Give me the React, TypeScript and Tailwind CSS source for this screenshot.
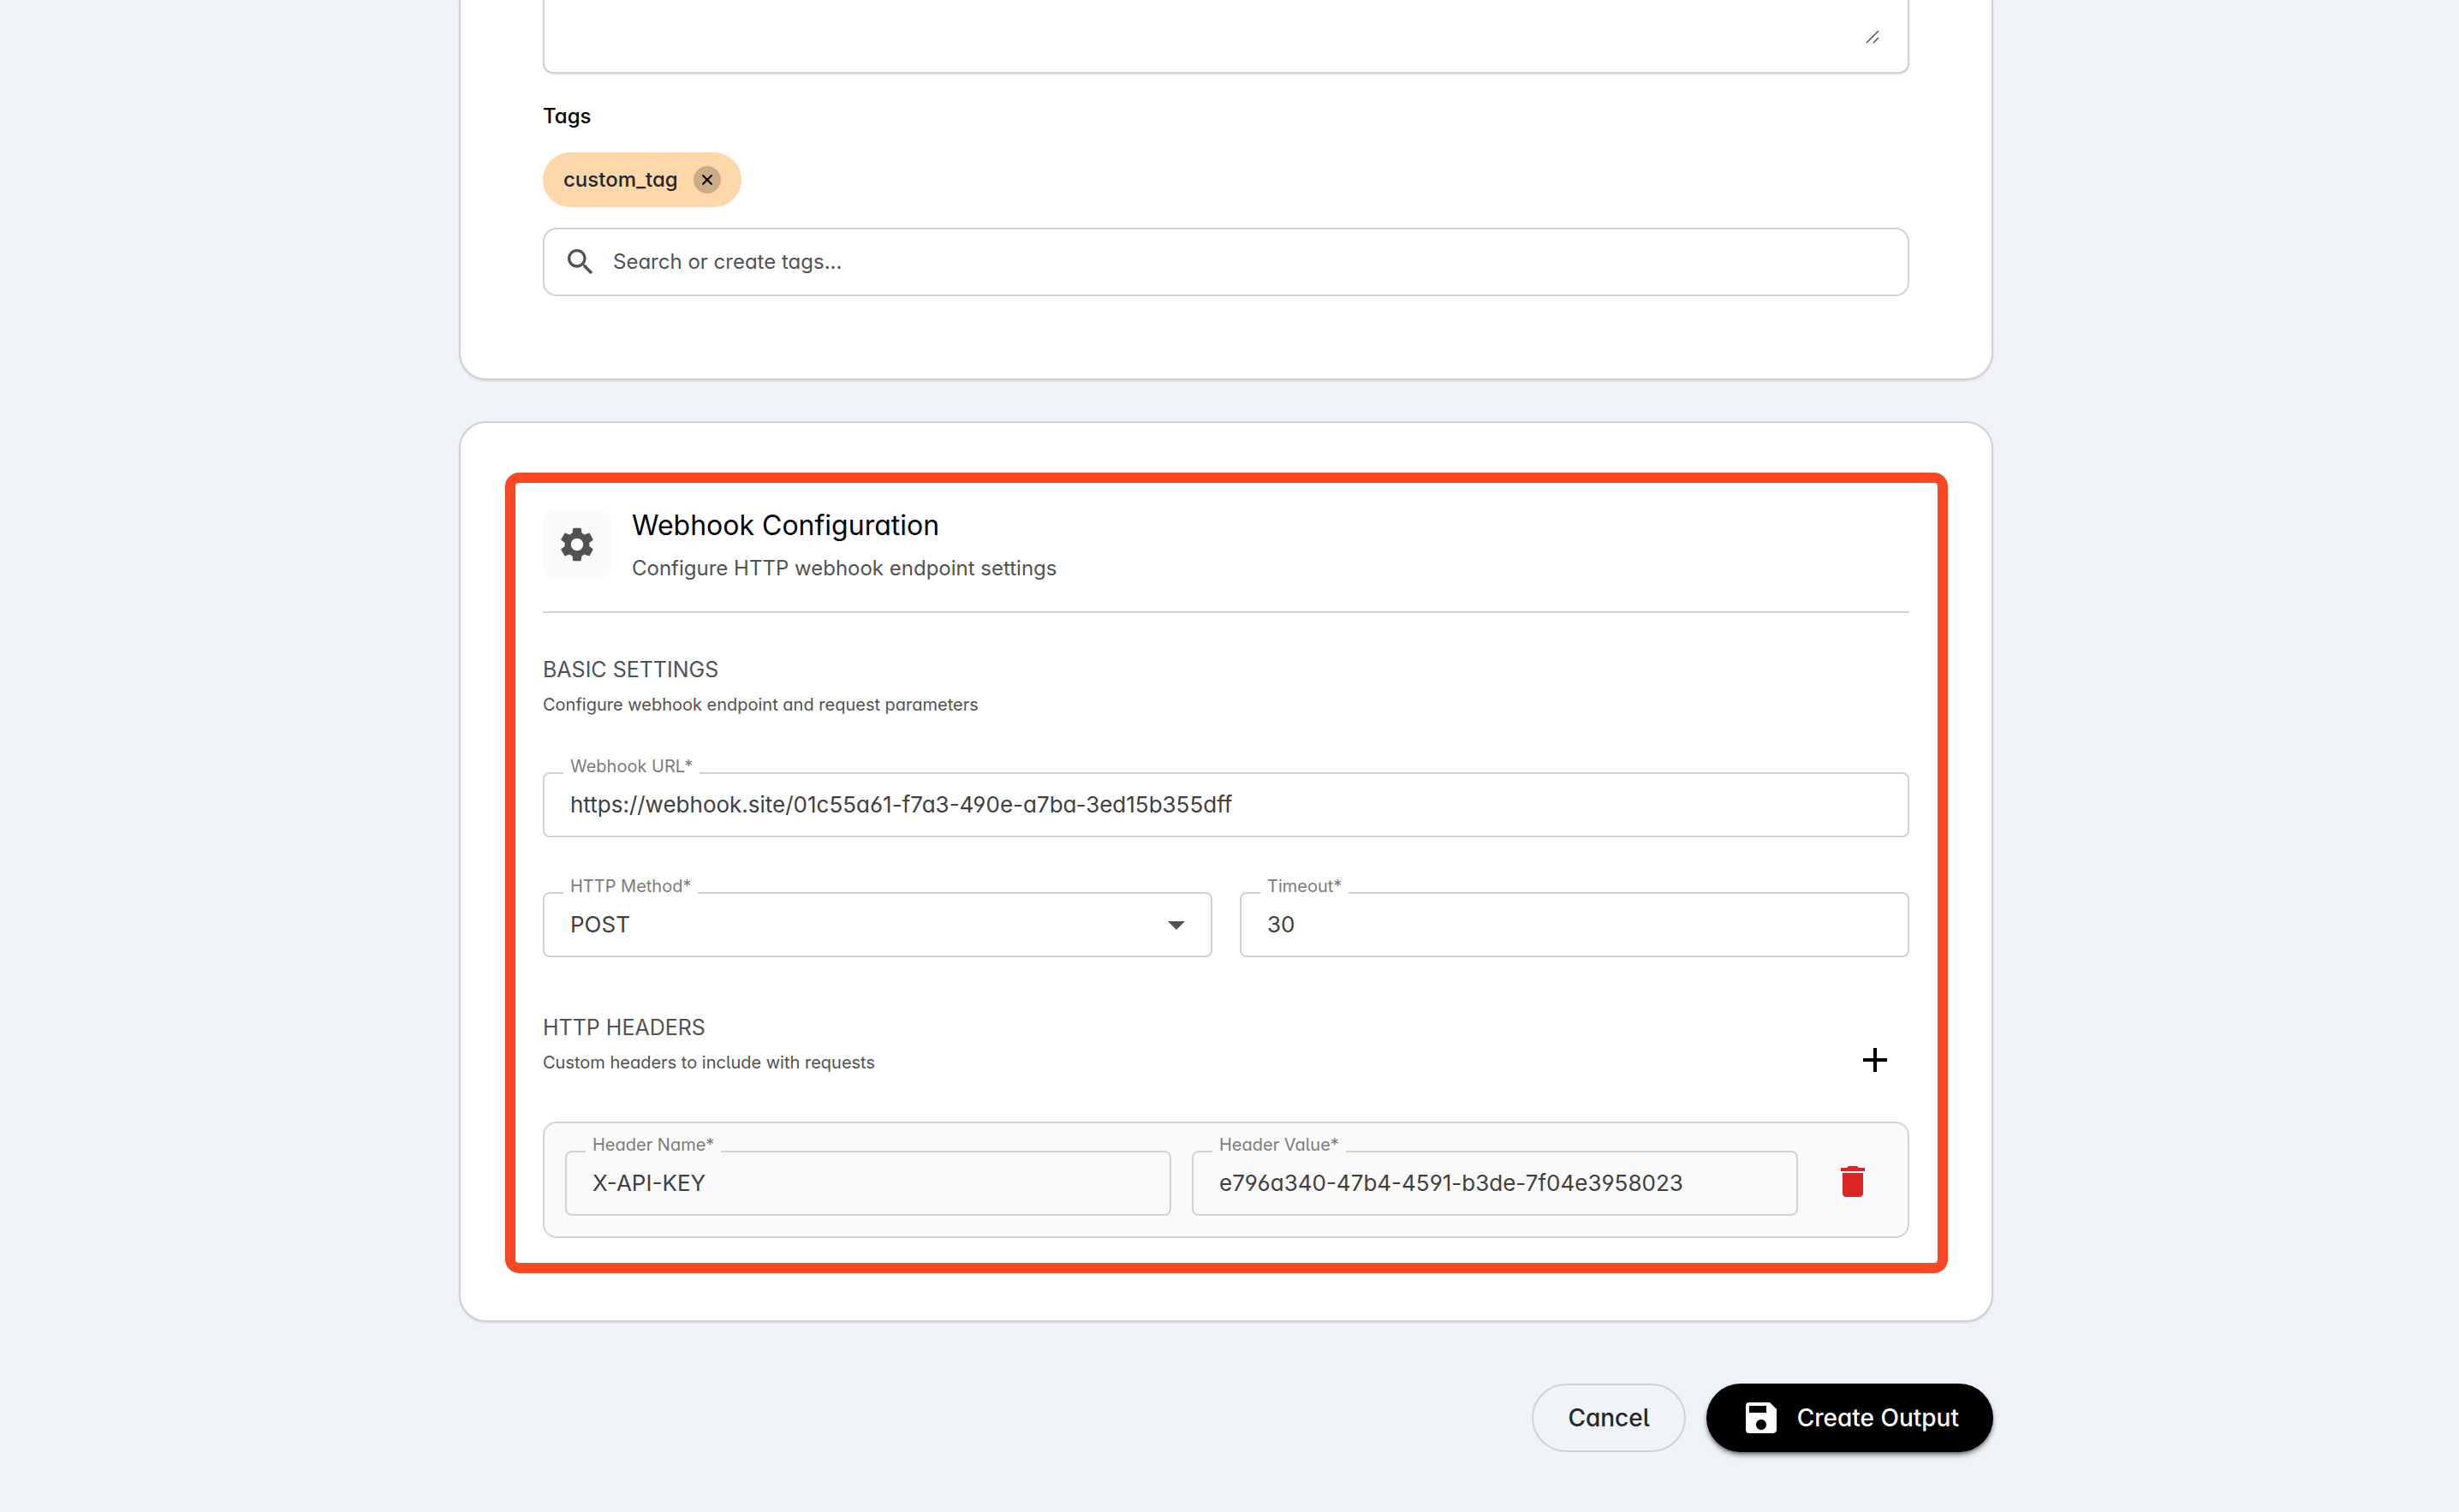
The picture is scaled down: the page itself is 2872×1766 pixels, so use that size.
import React, { useId } from "react";
import { MdAdd, MdDelete, MdSave, MdSearch, MdSettings } from "react-icons/md";

type FieldProps = {
  label: string;
  tone?: "white" | "muted";
  children: (id: string) => React.ReactNode;
};

const control =
  "block h-[76px] w-full appearance-none rounded-lg border-2 border-[#d2d2d2] bg-transparent px-[30px] pb-0.5 text-[26px] text-[#404040] outline-none";

function Field({ label, tone = "white", children }: FieldProps) {
  const id = useId();
  const background = tone === "white" ? "bg-white" : "bg-[#fafafa]";
  return (
    <div className="relative min-w-0 flex-1">
      {children(id)}
      <label
        htmlFor={id}
        className={`absolute -top-5 left-6 px-2 text-[20px] leading-[26px] text-[#7c7c7c] ${background}`}
      >
        {label}
      </label>
    </div>
  );
}

function TextField({ label, value, tone }: { label: string; value: string; tone?: "white" | "muted" }) {
  return (
    <Field label={label} tone={tone}>
      {(id) => <input id={id} type="text" defaultValue={value} className={control} />}
    </Field>
  );
}

function SectionHeading({ title, hint }: { title: string; hint: string }) {
  return (
    <div>
      <h3 className="text-[25px] leading-[34px] text-[#525252]">{title}</h3>
      <p className="mt-[10px] text-[20px] leading-7 text-[#525252]">{hint}</p>
    </div>
  );
}

export default function App() {
  return (
    <div className="min-h-screen bg-[#f0f4f9] pr-2 pb-[70px] font-['Inter','Liberation_Sans',sans-serif] [font-feature-settings:'cv03'_1,'cv04'_1,'cv05'_1,'cv11'_1]">
      <main className="mx-auto max-w-[1792px]">
        <section className="rounded-b-[32px] border-2 border-t-0 border-[#d2d2d2] bg-white px-24 pb-24 shadow-sm">
          <div className="relative rounded-b-xl border-2 border-t-0 border-[#d2d2d2] shadow-sm">
            <textarea
              aria-label="Description"
              className="block h-[84px] w-full resize-none bg-transparent px-8 text-[26px] outline-none"
            />
            <svg
              className="absolute right-[33px] bottom-[33px] size-4 text-[#5a5a5a]"
              viewBox="0 0 16 16"
              fill="none"
              stroke="currentColor"
              strokeWidth="1.6"
              aria-hidden="true"
            >
              <path d="M1 15 15 1M9 15l6-6" />
            </svg>
          </div>

          <h3 className="mt-8 text-[24px] leading-9 font-medium text-black">Tags</h3>
          <div className="mt-6 flex">
            <span className="flex h-16 items-center gap-[18px] rounded-full bg-[#fed7aa] px-6 text-[24px] font-medium text-[#262626]">
              custom_tag
              <button
                type="button"
                aria-label="Remove custom_tag"
                className="flex size-8 items-center justify-center rounded-full bg-black/20 text-black"
              >
                <svg className="size-3" viewBox="0 0 12 12" stroke="currentColor" strokeWidth="2" aria-hidden="true">
                  <path d="M.5.5l11 11M11.5.5l-11 11" />
                </svg>
              </button>
            </span>
          </div>
          <div className="mt-6 flex h-20 items-center gap-[18px] rounded-2xl border-2 border-[#d2d2d2] px-[22px]">
            <MdSearch className="size-10 shrink-0 text-[#525252]" aria-hidden="true" />
            <input
              type="text"
              aria-label="Search or create tags"
              placeholder="Search or create tags..."
              className="w-full bg-transparent text-[24px] outline-none placeholder:text-[#525252]"
            />
          </div>
        </section>

        <section className="mt-12 rounded-[32px] border-2 border-[#d2d2d2] bg-white pt-[58px] pr-[51px] pb-[55px] pl-[52px] shadow-sm">
          <div className="rounded-2xl border-12 border-[#f94623] pt-7 pr-[33px] pb-[29px] pl-8">
            <header className="flex items-center gap-6 border-b-2 border-[#d2d2d2] pb-[34px]">
              <div className="flex size-20 items-center justify-center rounded-2xl bg-[#fafafa]">
                <MdSettings className="size-12 text-[#525252]" aria-hidden="true" />
              </div>
              <div>
                <h2 className="text-[32px] leading-[44px] text-black">Webhook Configuration</h2>
                <p className="mt-3 text-[24px] leading-8 text-[#525252]">Configure HTTP webhook endpoint settings</p>
              </div>
            </header>

            <div className="mt-[49px]">
              <SectionHeading title="BASIC SETTINGS" hint="Configure webhook endpoint and request parameters" />
            </div>

            <div className="mt-[65px] flex">
              <TextField label="Webhook URL*" value="https://webhook.site/01c55a61-f7a3-490e-a7ba-3ed15b355dff" />
            </div>
            <div className="mt-16 flex gap-8">
              <Field label="HTTP Method*">
                {(id) => (
                  <>
                    <select id={id} defaultValue="POST" className={control}>
                      <option>POST</option>
                      <option>PUT</option>
                    </select>
                    <svg
                      className="pointer-events-none absolute top-[34px] right-8 h-[10px] w-5 fill-[#525252]"
                      viewBox="0 0 20 10"
                      aria-hidden="true"
                    >
                      <path d="M0 0h20L10 10z" />
                    </svg>
                  </>
                )}
              </Field>
              <TextField label="Timeout*" value="30" />
            </div>

            <div className="mt-[65px] flex items-start justify-between">
              <SectionHeading title="HTTP HEADERS" hint="Custom headers to include with requests" />
              <button
                type="button"
                aria-label="Add header"
                className="mt-[15px] flex size-20 items-center justify-center text-black"
              >
                <MdAdd className="size-12" />
              </button>
            </div>

            <div className="mt-8 flex items-end gap-6 rounded-2xl border-2 border-[#d2d2d2] bg-[#fafafa] px-6 pt-8 pb-6">
              <TextField label="Header Name*" value="X-API-KEY" tone="muted" />
              <TextField label="Header Value*" value="e796a340-47b4-4591-b3de-7f04e3958023" tone="muted" />
              <button
                type="button"
                aria-label="Delete header"
                className="-mt-1 flex size-20 shrink-0 items-center justify-center text-[#dc2626]"
              >
                <MdDelete className="size-12" />
              </button>
            </div>
          </div>
        </section>

        <footer className="mt-[72px] flex justify-end gap-6 text-[28px] font-medium">
          <button type="button" className="h-20 rounded-full border-2 border-[#d2d2d2] px-10 text-[#262626]">
            Cancel
          </button>
          <button
            type="button"
            className="flex h-20 items-center gap-[18px] rounded-full bg-black px-10 text-white shadow-md shadow-black/50"
          >
            <MdSave className="size-12" aria-hidden="true" />
            Create Output
          </button>
        </footer>
      </main>
    </div>
  );
}
